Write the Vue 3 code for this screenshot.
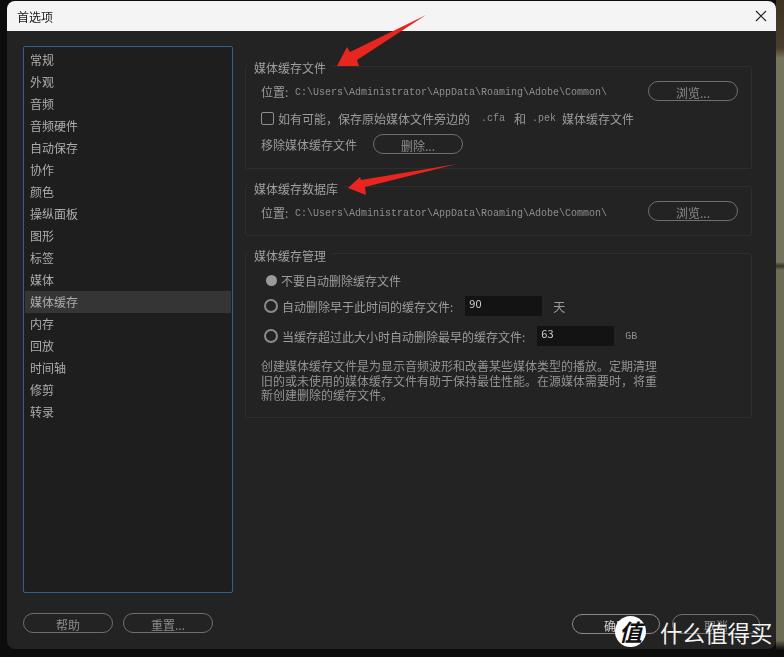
<template>
  <div class="screen">
    <div class="window">
      <div class="titlebar">
        <span class="title">首选项</span>
        <svg class="close" width="12" height="12" viewBox="0 0 12 12">
          <path d="M1 1L11 11M11 1L1 11" stroke="#222" stroke-width="1.1" fill="none" />
        </svg>
      </div>

      <div class="body">
        <div class="left">
          <ul class="list">
            <li v-for="item in menu" :key="item" :class="{ active: item === '媒体缓存' }">{{ item }}</li>
          </ul>
          <div class="btn-row">
            <button class="btn">帮助</button>
            <button class="btn">重置...</button>
          </div>
        </div>

        <div class="right">
          <div class="panels">
            <section class="group group-files">
              <span class="legend">媒体缓存文件</span>
              <div class="row path-row">
                <span class="path-label">位置:</span>
                <span class="path">C:\Users\Administrator\AppData\Roaming\Adobe\Common\</span>
                <button class="btn browse">浏览...</button>
              </div>
              <div class="row check-row">
                <span class="checkbox"></span>
                <span>如有可能，保存原始媒体文件旁边的</span>
                <span class="mono ext">.cfa</span>
                <span class="and">和</span>
                <span class="mono">.pek</span>
                <span>媒体缓存文件</span>
              </div>
              <div class="row remove-row">
                <span>移除媒体缓存文件</span>
                <button class="btn">删除...</button>
              </div>
            </section>

            <section class="group group-db">
              <span class="legend">媒体缓存数据库</span>
              <div class="row path-row">
                <span class="path-label">位置:</span>
                <span class="path">C:\Users\Administrator\AppData\Roaming\Adobe\Common\</span>
                <button class="btn browse">浏览...</button>
              </div>
            </section>

            <section class="group group-manage">
              <span class="legend">媒体缓存管理</span>
              <div class="row radio-row first">
                <span class="radio on"></span>
                <span>不要自动删除缓存文件</span>
              </div>
              <div class="row radio-row second">
                <span class="radio"></span>
                <span>自动删除早于此时间的缓存文件:</span>
                <span class="field field-days">90</span>
                <span class="unit">天</span>
              </div>
              <div class="row radio-row third">
                <span class="radio"></span>
                <span>当缓存超过此大小时自动删除最早的缓存文件:</span>
                <span class="field field-gb">63</span>
                <span class="unit mono">GB</span>
              </div>
              <p class="desc">创建媒体缓存文件是为显示音频波形和改善某些媒体类型的播放。定期清理旧的或未使用的媒体缓存文件有助于保持最佳性能。在源媒体需要时，将重新创建删除的缓存文件。</p>
            </section>
          </div>

          <div class="btn-row end">
            <button class="btn ok">确定</button>
            <button class="btn cancel">取消</button>
          </div>
        </div>
      </div>
    </div>

    <svg class="arrows" width="784" height="657" viewBox="0 0 784 657">
      <path d="M426 15L357 60L359 66L337 66L347 47L350 52Z" fill="#e8261f" />
      <path d="M457 164L365 187L366 195L348 188L360 177L361 180Z" fill="#e8261f" />
    </svg>

    <div class="mark">
      <span class="mark-logo">值</span>
      <span class="mark-text">什么值得买</span>
    </div>
  </div>
</template>

<script setup>
const menu = [
  '常规', '外观', '音频', '音频硬件', '自动保存', '协作', '颜色', '操纵面板', '图形',
  '标签', '媒体', '媒体缓存', '内存', '回放', '时间轴', '修剪', '转录',
]
</script>

<style>
html, body {
  margin: 0;
  background: #0c0c0b;
}
</style>

<style scoped>
.screen {
  position: relative;
  width: 784px;
  height: 657px;
  overflow: hidden;
  padding: 1px 7px 0;
  box-sizing: border-box;
  background-color: #0b0c0b;
  background-image: linear-gradient(180deg, #3d3223 0, #4a3d2c 48px, #76745c 58px, #76745c 262px, #3a3426 266px, #6e6c55 270px, #6e6c55 640px, #0b0c0b 650px);
  background-repeat: no-repeat;
  background-size: 8px 100%;
  background-position: right top;
  font-family: "Noto Sans CJK SC", "Liberation Sans", sans-serif;
  font-size: 12px;
  color: #9c9c9c;
}

.window {
  width: 769px;
  height: 648px;
  border-radius: 8px;
  overflow: hidden;
  background: #232323;
  filter: blur(0.3px);
}

.titlebar {
  height: 30px;
  background: #f4f4f4;
  display: flex;
  align-items: center;
  justify-content: space-between;
  padding: 0 9px 0 10px;
}

.title {
  font-size: 12px;
  color: #1b1b1b;
}

.body {
  display: flex;
  padding: 15px 16px 0;
}

.left {
  width: 210px;
  margin-right: 12px;
  flex: none;
}

.list {
  list-style: none;
  margin: 0;
  padding: 2px 1px 0;
  height: 547px;
  box-sizing: border-box;
  width: 210px;
  border: 1px solid #31608f;
  border-radius: 2px;
  background: #1e1e1e;
}

.list li {
  height: 22px;
  line-height: 22px;
  padding-left: 5px;
  color: #adadad;
}

.list li.active {
  background: #353535;
}

.btn-row {
  display: flex;
  gap: 10px;
  margin-top: 20px;
}

.btn-row.end {
  justify-content: flex-end;
  gap: 12px;
  margin: 0;
}

.btn {
  width: 90px;
  height: 20px;
  padding: 3px 0 0;
  border: 1px solid #6f6f6f;
  border-radius: 10px;
  background: transparent;
  font: inherit;
  line-height: 15px;
  color: #8c8c8c;
}

.btn.ok {
  width: 88px;
  color: #d5d5d5;
  border-color: #8a8a8a;
}

.btn.cancel {
  width: 88px;
}

.right {
  flex: 1;
  display: flex;
  flex-direction: column;
}

.panels {
  height: 568px;
  padding-top: 20px;
  box-sizing: border-box;
}

.group {
  position: relative;
  width: 507px;
  box-sizing: border-box;
  border: 1px solid #2e2e2e;
  border-radius: 2px;
  padding: 0 13px 0 15px;
}

.group-files {
  height: 103px;
}

.group-db {
  height: 50px;
  margin-top: 17px;
}

.group-manage {
  height: 165px;
  margin-top: 17px;
}

.legend {
  position: absolute;
  left: 2px;
  top: -7px;
  padding: 0 6px;
  background: #232323;
  line-height: 16px;
  color: #a0a0a0;
}

.group-db .legend,
.group-manage .legend {
  top: -6px;
}

.row {
  display: flex;
  align-items: center;
}

.path-row {
  height: 20px;
  padding-top: 14px;
}

.path-label {
  width: 34px;
  padding-top: 1px;
}

.path {
  padding-top: 3px;
}

.group-db .path-label {
  padding-top: 2px;
}

.group-db .path {
  padding-top: 5px;
}

.path,
.mono {
  font-family: "Liberation Mono", monospace;
  font-size: 10px;
  color: #8e8e8e;
}

.browse {
  margin-left: auto;
}

.check-row {
  margin-top: 7px;
  height: 20px;
  white-space: pre;
}

.checkbox {
  width: 11px;
  height: 11px;
  border: 1.5px solid #8e8e8e;
  border-radius: 2px;
  margin-right: 4px;
}

.ext {
  margin-left: 11px;
  margin-right: 9px;
}

.and {
  margin-right: 6px;
}

.check-row .mono:not(.ext) {
  margin-right: 6px;
}

.remove-row {
  margin-top: 6px;
  gap: 16px;
}

.radio-row {
  height: 20px;
}

.radio-row.first {
  margin-top: 16px;
  padding-left: 5px;
}

.radio-row.second {
  margin-top: 6px;
  padding-left: 3px;
}

.radio-row.third {
  margin-top: 10px;
  padding-left: 3px;
}

.radio {
  width: 10px;
  height: 10px;
  border: 2px solid #8b8b8b;
  border-radius: 50%;
  margin-right: 4px;
}

.radio.on {
  width: 11px;
  height: 11px;
  border: 0;
  background: #9a9a9a;
  margin-right: 4px;
}

.field {
  width: 77px;
  height: 20px;
  box-sizing: border-box;
  padding: 0 4px;
  line-height: 15px;
  font-size: 11px;
  color: #d0d0d0;
  background: #131313;
  margin-left: 12px;
}

.unit {
  margin-left: 11px;
}

.desc {
  margin: 13px 0 0;
  width: 402px;
  line-height: 14.5px;
  color: #949494;
}

.arrows {
  position: absolute;
  left: 0;
  top: 0;
  pointer-events: none;
}

.mark {
  position: absolute;
  left: 615px;
  top: 616px;
  display: flex;
  align-items: center;
  gap: 14px;
  color: #fff;
}

.mark-logo {
  width: 31px;
  height: 31px;
  border-radius: 50%;
  background: #fff;
  color: #111;
  font-size: 23px;
  font-weight: 700;
  font-style: italic;
  line-height: 30px;
  text-align: center;
}

.mark-text {
  font-size: 22.5px;
  line-height: 30px;
  color: #f2f2f2;
}
</style>
